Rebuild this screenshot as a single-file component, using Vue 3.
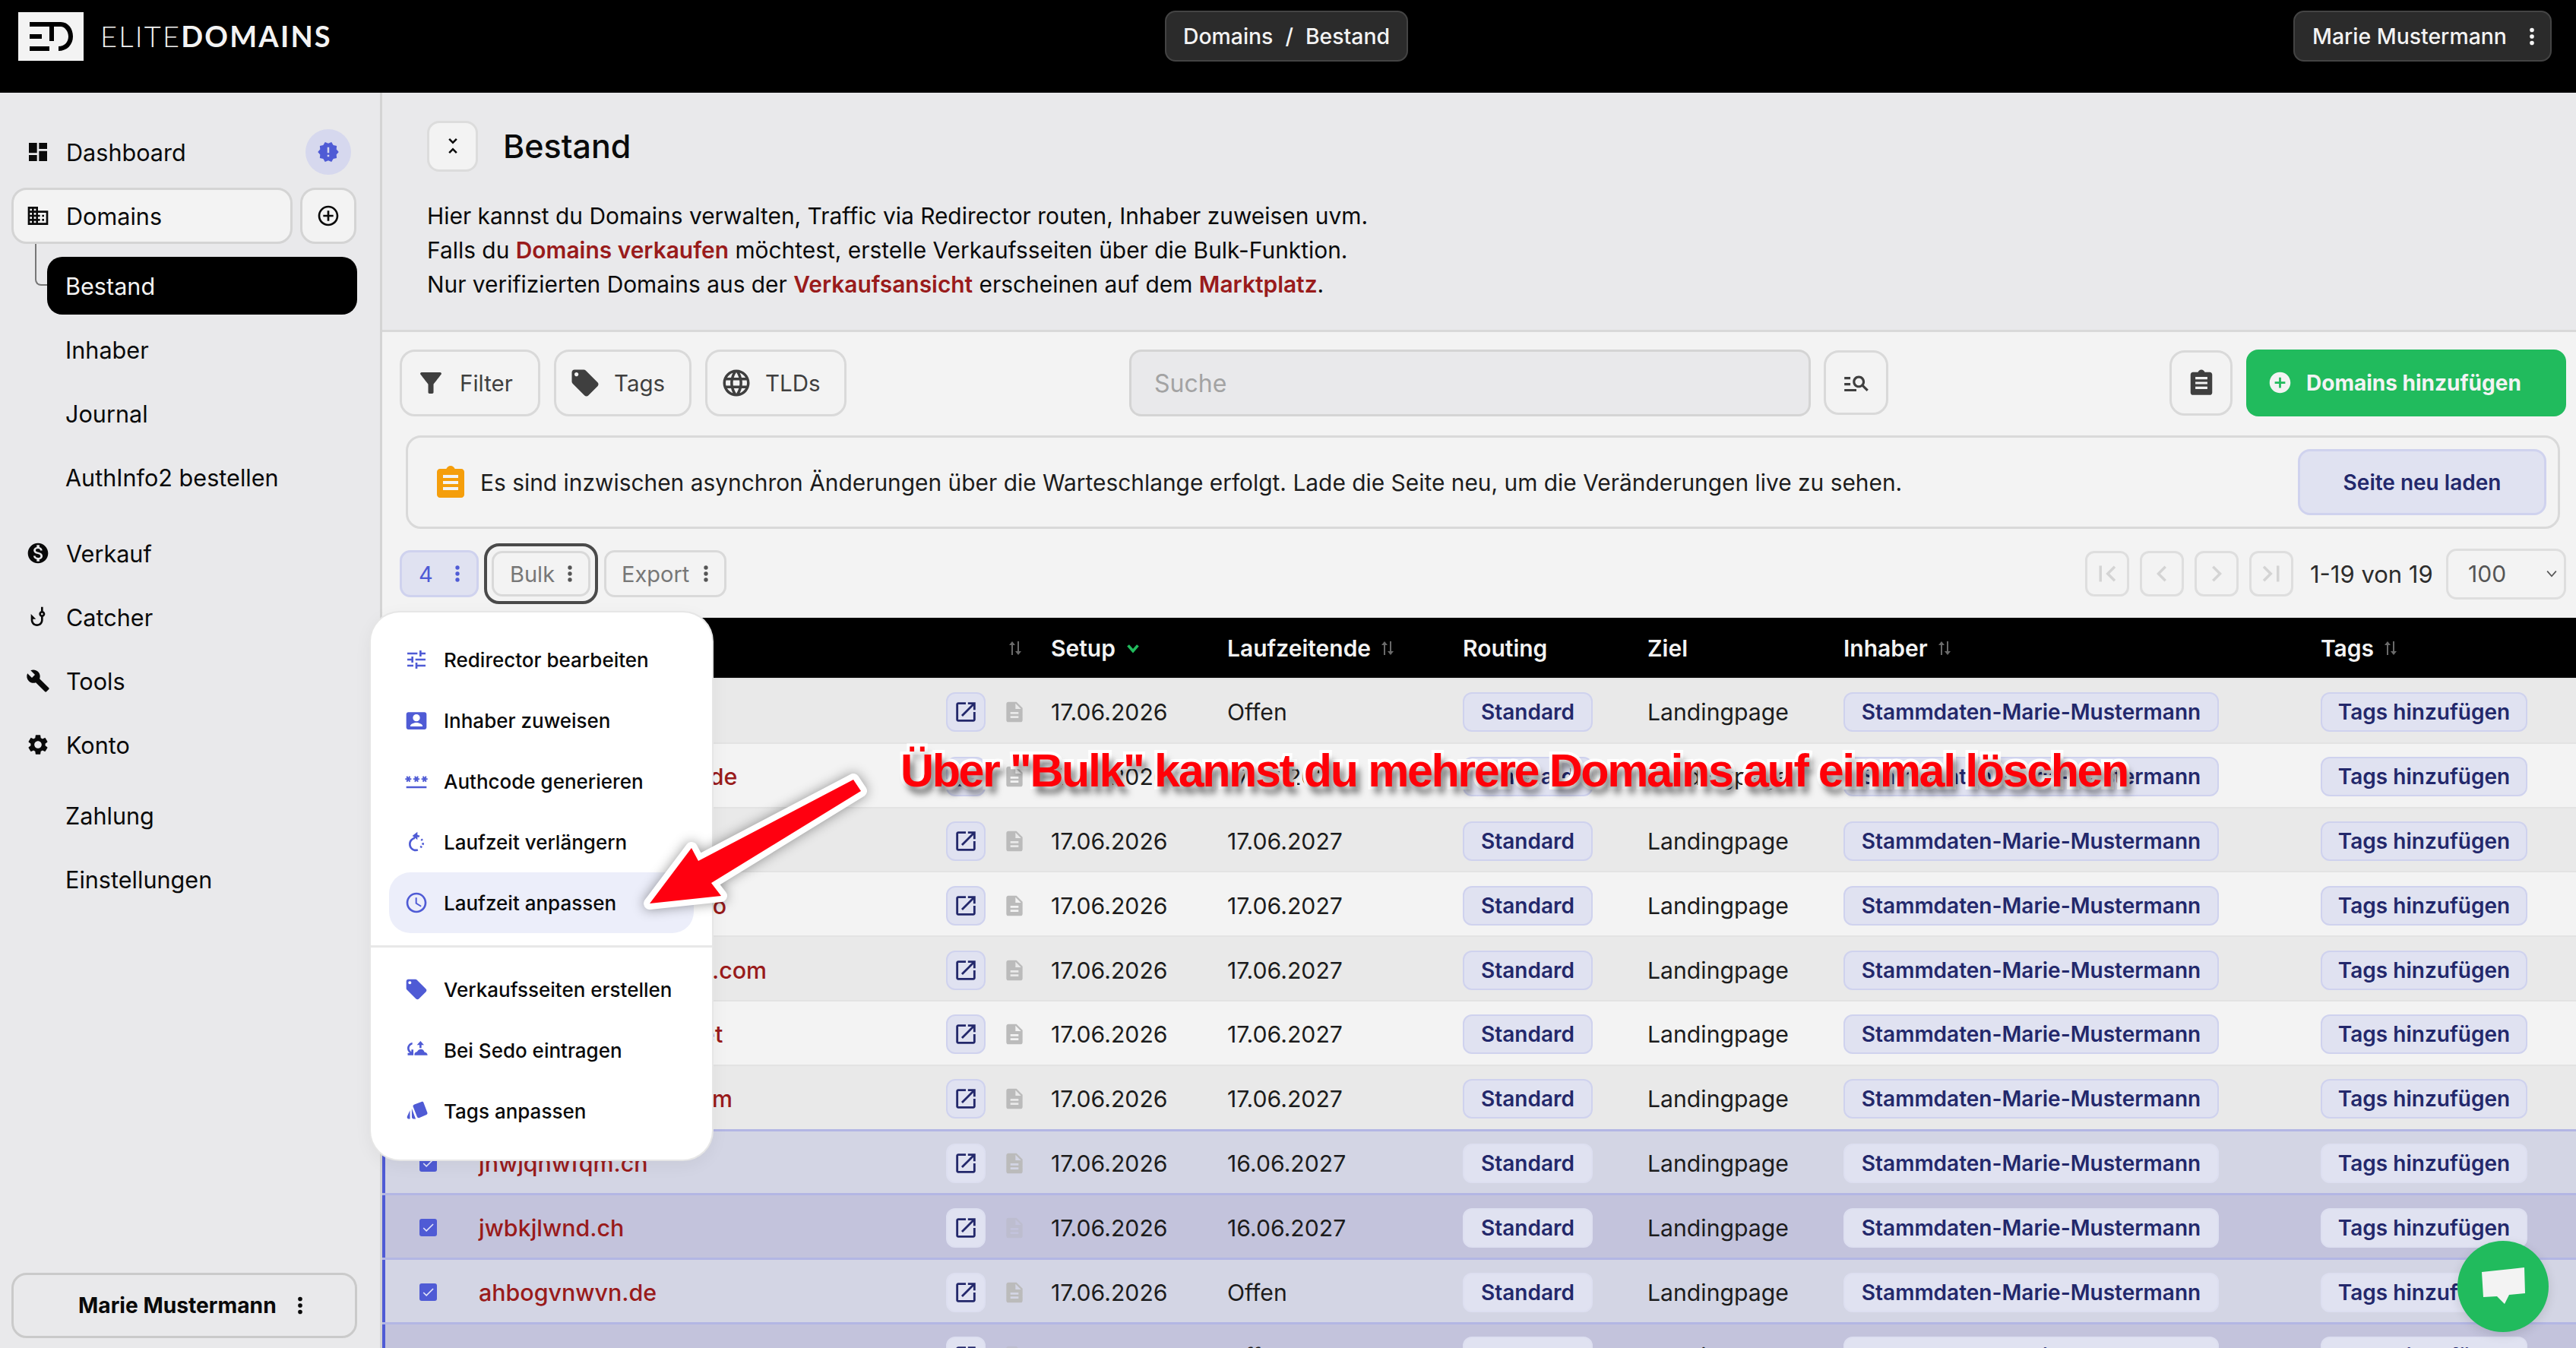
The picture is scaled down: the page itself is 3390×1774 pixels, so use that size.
<script setup>
const icons = {
  dashboard: 'M3 13h8V3H3v10zm0 8h8v-6H3v6zm10 0h8V11h-8v10zm0-18v6h8V3h-8z',
  domain: 'M12 7V3H2v18h20V7H12zM6 19H4v-2h2v2zm0-4H4v-2h2v2zm0-4H4V9h2v2zm0-4H4V5h2v2zm4 12H8v-2h2v2zm0-4H8v-2h2v2zm0-4H8V9h2v2zm0-4H8V5h2v2zm10 12h-8v-2h2v-2h-2v-2h2v-2h-2V9h8v10zm-2-8h-2v2h2v-2zm0 4h-2v2h2v-2z',
  addCircle: 'M13 7h-2v4H7v2h4v4h2v-4h4v-2h-4V7zm-1-5C6.48 2 2 6.48 2 12s4.48 10 10 10 10-4.48 10-10S17.52 2 12 2zm0 18c-4.41 0-8-3.59-8-8s3.59-8 8-8 8 3.59 8 8-3.59 8-8 8z',
  addFill: 'M12 2C6.48 2 2 6.48 2 12s4.48 10 10 10 10-4.48 10-10S17.52 2 12 2zm5 11h-4v4h-2v-4H7v-2h4V7h2v4h4v2z',
  release: 'M23 12l-2.44-2.78.34-3.68-3.61-.82-1.89-3.18L12 3 8.6 1.54 6.71 4.72l-3.61.81.34 3.68L1 12l2.44 2.78-.34 3.69 3.61.82 1.89 3.18L12 21l3.4 1.46 1.89-3.18 3.61-.82-.34-3.68L23 12zm-10 5h-2v-2h2v2zm0-4h-2V7h2v6z',
  unfold: 'M7.41 18.59L8.83 20 12 16.83 15.17 20l1.41-1.41L12 14l-4.59 4.59zm9.18-13.18L15.17 4 12 7.17 8.83 4 7.41 5.41 12 10l4.59-4.59z',
  filter: 'M4.25 5.61C6.27 8.2 10 13 10 13v6c0 .55.45 1 1 1h2c.55 0 1-.45 1-1v-6s3.72-4.8 5.74-7.39A.998.998 0 0 0 18.95 4H5.04a1 1 0 0 0-.79 1.61z',
  tag: 'M21.41 11.58l-9-9C12.05 2.22 11.55 2 11 2H4c-1.1 0-2 .9-2 2v7c0 .55.22 1.05.59 1.42l9 9c.36.36.86.58 1.41.58.55 0 1.05-.22 1.41-.59l7-7c.37-.36.59-.86.59-1.41 0-.55-.23-1.06-.59-1.42zM5.5 7C4.67 7 4 6.33 4 5.5S4.67 4 5.5 4 7 4.67 7 5.5 6.33 7 5.5 7z',
  globe: 'M11.99 2C6.47 2 2 6.48 2 12s4.47 10 9.99 10C17.52 22 22 17.52 22 12S17.52 2 11.99 2zm6.93 6h-2.95c-.32-1.25-.78-2.45-1.38-3.56 1.84.63 3.37 1.91 4.33 3.56zM12 4.04c.83 1.2 1.48 2.53 1.91 3.96h-3.82c.43-1.43 1.08-2.76 1.91-3.96zM4.26 14C4.1 13.36 4 12.69 4 12s.1-1.36.26-2h3.38c-.08.66-.14 1.32-.14 2 0 .68.06 1.34.14 2H4.26zm.82 2h2.95c.32 1.25.78 2.45 1.38 3.56-1.84-.63-3.37-1.9-4.33-3.56zm2.95-8H5.08c.96-1.66 2.49-2.93 4.33-3.56C8.81 5.55 8.35 6.75 8.03 8zM12 19.96c-.83-1.2-1.48-2.53-1.91-3.96h3.82c-.43 1.43-1.08 2.76-1.91 3.96zM14.34 14H9.66c-.09-.66-.16-1.32-.16-2 0-.68.07-1.35.16-2h4.68c.09.65.16 1.32.16 2 0 .68-.07 1.34-.16 2zm.25 5.56c.6-1.11 1.06-2.31 1.38-3.56h2.95c-.96 1.65-2.49 2.93-4.33 3.56zM16.36 14c.08-.66.14-1.32.14-2 0-.68-.06-1.34-.14-2h3.38c.16.64.26 1.31.26 2s-.1 1.36-.26 2h-3.38z',
  clip: 'M19 3h-4.18C14.4 1.84 13.3 1 12 1c-1.3 0-2.4.84-2.82 2H5c-1.1 0-2 .9-2 2v15c0 1.1.9 2 2 2h14c1.1 0 2-.9 2-2V5c0-1.1-.9-2-2-2zM7 7h10v2H7V7zm0 4h10v2H7v-2zm0 4h10v2H7v-2z',
  search: 'M7 9H2V7h5v2zm0 3H2v2h5v-2zm13.59 7l-3.83-3.83c-.8.52-1.74.83-2.76.83-2.76 0-5-2.24-5-5s2.24-5 5-5 5 2.24 5 5c0 1.02-.31 1.96-.83 2.75L22 17.59 20.59 19zM17 11c0-1.65-1.35-3-3-3s-3 1.35-3 3 1.35 3 3 3 3-1.35 3-3zM2 19h10v-2H2v2z',
  money: 'M12 2C6.48 2 2 6.48 2 12s4.48 10 10 10 10-4.48 10-10S17.52 2 12 2zm1.41 16.09V20h-2.67v-1.93c-1.71-.36-3.16-1.46-3.27-3.4h1.96c.1 1.05.82 1.87 2.65 1.87 1.96 0 2.4-.98 2.4-1.59 0-.83-.44-1.61-2.67-2.14-2.48-.6-4.18-1.62-4.18-3.67 0-1.72 1.39-2.84 3.11-3.21V4h2.67v1.95c1.86.45 2.79 1.86 2.87 3.39H14.3c-.05-1.11-.64-1.87-2.22-1.87-1.5 0-2.4.68-2.4 1.64 0 .84.65 1.39 2.67 1.91s4.18 1.39 4.18 3.91c-.01 1.83-1.38 2.83-3.12 3.16z',
  hook: 'M19 9c0-1.3-.84-2.4-2-2.82V2h-2v4.18C13.84 6.6 13 7.7 13 9s.84 2.4 2 2.82V15c0 2.21-1.79 4-4 4s-4-1.79-4-4v-1h3L5 9v6c0 3.31 2.69 6 6 6s6-2.69 6-6v-3.18c1.16-.42 2-1.52 2-2.82zm-3 1c-.55 0-1-.45-1-1s.45-1 1-1 1 .45 1 1-.45 1-1 1z',
  wrench: 'M22.7 19l-9.1-9.1c.9-2.3.4-5-1.5-6.9-2-2-5-2.4-7.4-1.3L9 6 6 9 1.6 4.7C.4 7.1.9 10.1 2.9 12.1c1.9 1.9 4.6 2.4 6.9 1.5l9.1 9.1c.4.4 1 .4 1.4 0l2.3-2.3c.5-.4.5-1.1.1-1.4z',
  gear: 'M19.14 12.94c.04-.3.06-.61.06-.94 0-.32-.02-.64-.07-.94l2.03-1.58c.18-.14.23-.41.12-.61l-1.92-3.32c-.12-.22-.37-.29-.59-.22l-2.39.96c-.5-.38-1.03-.7-1.62-.94l-.36-2.54c-.04-.24-.24-.41-.48-.41h-3.84c-.24 0-.43.17-.47.41l-.36 2.54c-.59.24-1.13.57-1.62.94l-2.39-.96c-.22-.08-.47 0-.59.22L2.74 8.87c-.12.21-.08.47.12.61l2.03 1.58c-.05.3-.09.63-.09.94s.02.64.07.94l-2.03 1.58c-.18.14-.23.41-.12.61l1.92 3.32c.12.22.37.29.59.22l2.39-.96c.5.38 1.03.7 1.62.94l.36 2.54c.05.24.24.41.48.41h3.84c.24 0 .44-.17.47-.41l.36-2.54c.59-.24 1.13-.56 1.62-.94l2.39.96c.22.08.47 0 .59-.22l1.92-3.32c.12-.22.07-.47-.12-.61l-2.01-1.58zM12 15.6c-1.98 0-3.6-1.62-3.6-3.6s1.62-3.6 3.6-3.6 3.6 1.62 3.6 3.6-1.62 3.6-3.6 3.6z',
  tune: 'M3 17v2h6v-2H3zM3 5v2h10V5H3zm10 16v-2h8v-2h-8v-2h-2v6h2zM7 9v2H3v2h4v2h2V9H7zm14 4v-2H11v2h10zm-6-4h2V7h4V5h-4V3h-2v6z',
  person: 'M2 6c0-1.1.9-2 2-2h16c1.1 0 2 .9 2 2v13c0 1.1-.9 2-2 2H4c-1.1 0-2-.9-2-2V6zm13.500 3.500a3.500 3.500 0 1 0-7 0 3.500 3.500 0 0 0 7 0zM6 17.500V18h12v-.5c0-2-4-3.200-6-3.200s-6 1.200-6 3.200z',
  password: 'M2 17h20v2H2v-2zm1.15-4.05L4 11.47l.85 1.48 1.3-.75-.85-1.48H7v-1.5H5.3l.85-1.47L4.85 7 4 8.47 3.15 7l-1.3.75.85 1.47H1v1.5h1.7l-.85 1.48 1.3.75zm6.7-.75l1.3.75.85-1.48.85 1.48 1.3-.75-.85-1.48H15v-1.5h-1.7l.85-1.47-1.3-.75L12 8.47 11.15 7l-1.3.75.85 1.47H9v1.5h1.7l-.85 1.48zM23 9.22h-1.7l.85-1.47-1.3-.75L20 8.47 19.15 7l-1.3.75.85 1.47H17v1.5h1.7l-.85 1.48 1.3.75.85-1.48.85 1.48 1.3-.75-.85-1.48H23v-1.5z',
  renew: 'M13 2l-5 4 5 4V7.100c.5.1 1 .2 1.400.4l1-1.700c-.8-.4-1.600-.7-2.400-.8V2zM10.500 7.200C7.100 7.900 4.500 10.700 4.500 14.200c0 3.900 3.100 7 7 7 .8 0 1.500-.1 2.200-.3l-.6-1.900c-.5.1-1 .2-1.600.2-2.800 0-5-2.200-5-5 0-2.500 1.800-4.600 4-5V7.200zM17.500 8.600l-1.400 1.400c.3.300.6.700.8 1.100l1.800-.9c-.3-.6-.7-1.100-1.200-1.600zM19.500 13h-2c0 .5-.1 1-.2 1.500l1.900.6c.2-.7.3-1.400.3-2.100zM18 16.800l-1.600-1.200c-.3.400-.6.700-1 1l1.100 1.600c.6-.4 1.100-.9 1.500-1.400z',
  clock: 'M11.99 2C6.47 2 2 6.48 2 12s4.47 10 9.99 10C17.52 22 22 17.52 22 12S17.52 2 11.99 2zM12 20c-4.42 0-8-3.58-8-8s3.58-8 8-8 8 3.58 8 8-3.58 8-8 8zm.5-13H11v6l5.25 3.15.75-1.23-4.5-2.67z',
  sedo: 'M16 3l-3.500 4H15v3h2V7h2.500L16 3zM8 4.500C5.200 4.900 3 7.300 3 10.200c0 2 1 3.700 2.500 4.700H3.400V17H9v-5.600H7v2.200c-1.200-.7-2-2-2-3.400 0-1.800 1.300-3.400 3-3.800V4.500zM16.500 11c-1.800 0-3.300 1.100-3.900 2.700-1.600.1-2.600 1.300-2.600 2.800 0 .2 0 .3.1.5H23c-.1-1.700-1.500-3-3.100-3.100-.5-1.700-1.700-2.900-3.400-2.900z',
  tagsFan: 'M10.500 5.500L17 3c.9-.3 1.800.1 2.100.9l3.700 9.800c.3.8-.1 1.700-.9 2L15 18.700c-1 .4-2 0-2.400-1L8.700 7.700c-.4-.9.6-1.800 1.800-2.200zM7.400 9.500l3.600 9.600c.1.300.3.6.5.8H9.200c-1 0-1.700-.8-1.700-1.700L7.400 9.500zM5.600 11.500l.1 8.400H4.300c-1.200-.2-1.900-1.400-1.400-2.500l2.700-5.900z',
  openNew: 'M19 19H5V5h7V3H5c-1.11 0-2 .9-2 2v14c0 1.1.89 2 2 2h14c1.1 0 2-.9 2-2v-7h-2v7zM14 3v2h3.59l-9.83 9.83 1.41 1.41L19 6.41V10h2V3h-7z',
  doc: 'M14 2H6c-1.1 0-1.99.9-1.99 2L4 20c0 1.1.89 2 1.99 2H18c1.1 0 2-.9 2-2V8l-6-6zm2 16H8v-2h8v2zm0-4H8v-2h8v2zm-3-5V3.5L18.5 9H13z',
  first: 'M18.41 16.59L13.82 12l4.59-4.59L17 6l-6 6 6 6zM6 6h2v12H6z',
  prev: 'M15.41 7.41L14 6l-6 6 6 6 1.41-1.41L10.83 12z',
  next: 'M10 6L8.59 7.41 13.17 12l-4.58 4.59L10 18l6-6z',
  last: 'M5.59 7.41L10.18 12l-4.59 4.59L7 18l6-6-6-6zM16 6h2v12h-2z',
  more: 'M12 8a2 2 0 1 0 0-4 2 2 0 0 0 0 4zm0 2a2 2 0 1 0 0 4 2 2 0 0 0 0-4zm0 6a2 2 0 1 0 0 4 2 2 0 0 0 0-4z',
  check: 'M9 16.2L4.8 12l-1.4 1.4L9 19 21 7l-1.4-1.4z',
  sort: 'M8 3L4 8h3v13h2V8h3L8 3zM16 21l4-5h-3V3h-2v13h-3l4 5z'
}

const navTop = [
  { label: 'Dashboard', icon: 'dashboard' }
]
const subNav = ['Inhaber', 'Journal', 'AuthInfo2 bestellen']
const navMain = [
  { label: 'Verkauf', icon: 'money' },
  { label: 'Catcher', icon: 'hook' },
  { label: 'Tools', icon: 'wrench' },
  { label: 'Konto', icon: 'gear' }
]
const navSub2 = ['Zahlung', 'Einstellungen']

const toolbar = [
  { label: 'Filter', icon: 'filter', cls: 'w-filter' },
  { label: 'Tags', icon: 'tag', cls: 'w-tags' },
  { label: 'TLDs', icon: 'globe', cls: 'w-tlds' }
]

const pages = ['first', 'prev', 'next', 'last']

const menuA = [
  { label: 'Redirector bearbeiten', icon: 'tune' },
  { label: 'Inhaber zuweisen', icon: 'person' },
  { label: 'Authcode generieren', icon: 'password' },
  { label: 'Laufzeit verlängern', icon: 'renew' },
  { label: 'Laufzeit anpassen', icon: 'clock', active: true }
]
const menuB = [
  { label: 'Verkaufsseiten erstellen', icon: 'tag' },
  { label: 'Bei Sedo eintragen', icon: 'sedo' },
  { label: 'Tags anpassen', icon: 'tagsFan' }
]

const rows = [
  { domain: 'qtzmkhrlwpv.ch', end: 'Offen', sel: 0 },
  { domain: 'vkhtrzpqmlwgbnxss.de', end: '17.06.2027', sel: 0 },
  { domain: 'pwnqzrtkvhl.ch', end: '17.06.2027', sel: 0 },
  { domain: 'hrvkzmtqlwpbnzg.info', end: '17.06.2027', sel: 0 },
  { domain: 'zbtwkqrhmnpvgxlkrz.com', end: '17.06.2027', sel: 0 },
  { domain: 'lgkvnqwrtzhmpqrj.net', end: '17.06.2027', sel: 0 },
  { domain: 'wmqkrvtzphlnkvb.com', end: '17.06.2027', sel: 0 },
  { domain: 'jnwjqnwfqm.ch', end: '16.06.2027', sel: 1 },
  { domain: 'jwbkjlwnd.ch', end: '16.06.2027', sel: 2 },
  { domain: 'ahbogvnwvn.de', end: 'Offen', sel: 1 },
  { domain: 'mnvbqkdwlz.de', end: 'Offen', sel: 2 }
]
</script>

<template>
  <div class="page">
    <header class="topbar">
      <div class="brand">
        <svg class="logo" viewBox="0 0 86 64">
          <rect width="86" height="64" fill="#f3f3f3" />
          <path d="M15 13H56C66 13 72 22 72 32C72 43 64 51 53 51V45C61 45 66 39 66 32C66 25 61 19 56 19H47V38H41V19H15ZM15 29H31V35H15ZM15 45H41V51H15Z" fill="#000" />
        </svg>
        <span class="wordmark"><span class="thin">ELITE</span><span class="strong">DOMAINS</span></span>
      </div>
      <div class="crumb"><span>Domains</span><span class="slash">/</span><span>Bestand</span></div>
      <div class="user-pill">
        <span>Marie Mustermann</span>
        <svg class="more-ico" viewBox="0 0 24 24"><path :d="icons.more" /></svg>
      </div>
    </header>

    <div class="body">
      <aside class="sidebar">
        <div v-for="n in navTop" :key="n.label" class="nav-row first">
          <svg class="nav-ico" viewBox="0 0 24 24"><path :d="icons[n.icon]" /></svg>
          <span>{{ n.label }}</span>
          <span class="badge"><svg viewBox="0 0 24 24"><path :d="icons.release" /></svg></span>
        </div>
        <div class="domains-row">
          <div class="domains-box">
            <svg class="nav-ico" viewBox="0 0 24 24"><path :d="icons.domain" /></svg>
            <span>Domains</span>
          </div>
          <div class="plus-box"><svg viewBox="0 0 24 24"><path :d="icons.addCircle" /></svg></div>
        </div>
        <div class="tree">
          <span class="tree-line"></span>
          <div class="active-item">Bestand</div>
          <div v-for="s in subNav" :key="s" class="sub-item">{{ s }}</div>
        </div>
        <div class="main-nav">
          <div v-for="n in navMain" :key="n.label" class="nav-row">
            <svg class="nav-ico" viewBox="0 0 24 24"><path :d="icons[n.icon]" /></svg>
            <span>{{ n.label }}</span>
          </div>
        </div>
        <div class="konto-sub">
          <div v-for="s in navSub2" :key="s" class="sub-item">{{ s }}</div>
        </div>
        <div class="user-box">
          <span>Marie Mustermann</span>
          <svg class="more-ico" viewBox="0 0 24 24"><path :d="icons.more" /></svg>
        </div>
      </aside>

      <main class="main">
        <section class="intro">
          <div class="title-row">
            <div class="collapse"><svg viewBox="0 0 24 24"><path :d="icons.unfold" /></svg></div>
            <h1>Bestand</h1>
          </div>
          <p>Hier kannst du Domains verwalten, Traffic via Redirector routen, Inhaber zuweisen uvm.</p>
          <p>Falls du <b>Domains verkaufen</b> möchtest, erstelle Verkaufsseiten über die Bulk-Funktion.</p>
          <p>Nur verifizierten Domains aus der <b>Verkaufsansicht</b> erscheinen auf dem <b>Marktplatz</b>.</p>
        </section>

        <section class="toolbar">
          <div v-for="b in toolbar" :key="b.label" class="tool-btn" :class="b.cls">
            <svg viewBox="0 0 24 24"><path :d="icons[b.icon]" /></svg>
            <span>{{ b.label }}</span>
          </div>
          <div class="search">Suche</div>
          <div class="icon-btn search-btn"><svg viewBox="0 0 24 24"><path :d="icons.search" /></svg></div>
          <div class="icon-btn clip-btn"><svg viewBox="0 0 24 24"><path :d="icons.clip" fill-rule="evenodd" /></svg></div>
          <div class="add-btn">
            <svg viewBox="0 0 24 24"><path :d="icons.addFill" /></svg>
            <span>Domains hinzufügen</span>
          </div>
        </section>

        <section class="notice">
          <svg class="notice-ico" viewBox="0 0 24 24"><path :d="icons.clip" fill-rule="evenodd" /></svg>
          <span class="notice-text">Es sind inzwischen asynchron Änderungen über die Warteschlange erfolgt. Lade die Seite neu, um die Veränderungen live zu sehen.</span>
          <div class="reload">Seite neu laden</div>
        </section>

        <section class="actions">
          <div class="act count"><span>4</span><svg viewBox="0 0 24 24"><path :d="icons.more" /></svg></div>
          <div class="focus-ring"><div class="act bulk"><span>Bulk</span><svg viewBox="0 0 24 24"><path :d="icons.more" /></svg></div></div>
          <div class="act export"><span>Export</span><svg viewBox="0 0 24 24"><path :d="icons.more" /></svg></div>
          <div class="pager">
            <div v-for="p in pages" :key="p" class="page-btn"><svg viewBox="0 0 24 24"><path :d="icons[p]" /></svg></div>
            <span class="page-text">1-19 von 19</span>
            <div class="per-page">
              <span>100</span>
              <svg viewBox="0 0 24 24"><path d="M5 8l7 8 7-8" fill="none" stroke="#555" stroke-width="2" /></svg>
            </div>
          </div>
        </section>

        <section class="table">
          <div class="thead grid">
            <span></span>
            <span>Domain</span>
            <span></span>
            <span class="sort-only"><svg class="sort" viewBox="0 0 24 24"><path :d="icons.sort" /></svg></span>
            <span class="th">Setup <svg class="chev" viewBox="0 0 24 24"><path d="M5 8l7 8 7-8" fill="none" stroke="#21bb5d" stroke-width="4" /></svg></span>
            <span class="th">Laufzeitende <svg class="sort" viewBox="0 0 24 24"><path :d="icons.sort" /></svg></span>
            <span class="th">Routing</span>
            <span class="th">Ziel</span>
            <span class="th">Inhaber <svg class="sort" viewBox="0 0 24 24"><path :d="icons.sort" /></svg></span>
            <span class="th">Tags <svg class="sort" viewBox="0 0 24 24"><path :d="icons.sort" /></svg></span>
          </div>
          <div
            v-for="(r, i) in rows"
            :key="r.domain"
            class="row grid"
            :class="[i % 2 ? 'even' : 'odd', r.sel ? 'sel sel-' + r.sel : '']"
          >
            <span class="cb-cell">
              <span class="cb" :class="{ on: r.sel }">
                <svg v-if="r.sel" viewBox="0 0 24 24"><path :d="icons.check" /></svg>
              </span>
            </span>
            <span class="dom">{{ r.domain }}</span>
            <span class="open"><svg viewBox="0 0 24 24"><path :d="icons.openNew" /></svg></span>
            <span class="docu"><svg viewBox="0 0 24 24"><path :d="icons.doc" /></svg></span>
            <span>17.06.2026</span>
            <span>{{ r.end }}</span>
            <span class="pill p-std">Standard</span>
            <span>Landingpage</span>
            <span class="pill p-own">Stammdaten-Marie-Mustermann</span>
            <span class="pill p-tag">Tags hinzufügen</span>
          </div>
        </section>
      </main>
    </div>

    <div class="menu">
      <div class="menu-group">
        <div v-for="m in menuA" :key="m.label" class="menu-item" :class="{ active: m.active }">
          <svg viewBox="0 0 24 24"><path :d="icons[m.icon]" /></svg>
          <span>{{ m.label }}</span>
        </div>
      </div>
      <div class="menu-sep"></div>
      <div class="menu-group b">
        <div v-for="m in menuB" :key="m.label" class="menu-item">
          <svg viewBox="0 0 24 24"><path :d="icons[m.icon]" /></svg>
          <span>{{ m.label }}</span>
        </div>
      </div>
    </div>

    <div class="chat">
      <svg viewBox="0 0 120 120"><path d="M32 41L88 35 89 69 68 71 62 83 52 73 34 74z" fill="#f3f3f3" /></svg>
    </div>

    <svg class="arrow" viewBox="0 0 3390 1774">
      <polygon points="855,1189 910,1116 919,1133 1123,1026 1133,1041 936,1162 949,1179" fill="#ff0010" stroke="#fff" stroke-width="16" stroke-linejoin="round" paint-order="stroke" />
    </svg>
    <div class="callout">Über "Bulk" kannst du mehrere Domains auf einmal löschen</div>
  </div>
</template>

<style scoped>
.page {
  position: relative;
  width: 3390px;
  height: 1774px;
  overflow: hidden;
  background: #f3f3f3;
  font-family: Inter, "Noto Sans", sans-serif;
  font-size: 30px;
  color: #0a0a0a;
}
svg { display: block; flex: none; fill: currentColor; }

.topbar {
  position: relative;
  height: 122px;
  background: #000;
  display: flex;
  align-items: flex-start;
  justify-content: center;
}
.brand {
  position: absolute;
  left: 24px;
  top: 16px;
  display: flex;
  align-items: center;
  gap: 22px;
}
.logo { width: 86px; height: 64px; }
.wordmark {
  font-family: Lato, Inter, sans-serif;
  font-size: 38px;
  color: #f3f3f3;
  letter-spacing: 2.2px;
  line-height: 1;
  margin-top: -3px;
}
.wordmark .thin { font-weight: 300; }
.wordmark .strong { font-weight: 700; }
.crumb, .user-pill {
  height: 67px;
  margin-top: 14px;
  background: #2b2b2b;
  border: 2px solid #444;
  border-radius: 14px;
  box-sizing: border-box;
  display: flex;
  align-items: center;
  color: #f3f3f3;
  font-size: 28.4px;
  font-weight: 500;
}
.crumb { width: 320px; margin-right: 4px; justify-content: center; gap: 16px; }
.user-pill {
  position: absolute;
  left: 3018px;
  top: 0;
  width: 340px;
  padding-left: 23px;
  gap: 16px;
}
.more-ico { width: 34px; height: 34px; }

.body { display: flex; height: 1652px; }

.sidebar {
  width: 503px;
  flex: none;
  box-sizing: border-box;
  background: #e9e9eb;
  border-right: 3px solid #d4d4d4;
  padding: 41px 0 13px;
  display: flex;
  flex-direction: column;
  font-size: 30.6px;
}
.nav-row {
  height: 76px;
  display: flex;
  align-items: center;
  padding-left: 34px;
  gap: 21px;
  margin-bottom: 8px;
}
.nav-row.first { height: 74px; margin-bottom: 10px; position: relative; }
.nav-ico { width: 32px; height: 32px; }
.badge {
  position: absolute;
  left: 402px;
  top: 7px;
  width: 60px;
  height: 60px;
  border-radius: 50%;
  background: #d6d8ee;
  color: #4f5bd5;
  display: flex;
  align-items: center;
  justify-content: center;
}
.badge svg { width: 30px; height: 30px; }
.domains-row { display: flex; gap: 10px; padding-left: 15px; }
.domains-box, .plus-box {
  height: 74px;
  box-sizing: border-box;
  background: #f3f3f3;
  border: 3px solid #d4d4d4;
  border-radius: 20px;
  display: flex;
  align-items: center;
}
.domains-box { width: 370px; padding-left: 16px; gap: 21px; }
.plus-box { width: 74px; justify-content: center; }
.plus-box svg { width: 32px; height: 32px; }
.tree { position: relative; padding-top: 17px; margin-bottom: 16px; }
.tree-line {
  position: absolute;
  left: 46px;
  top: 0;
  width: 16px;
  height: 55px;
  border-left: 2px solid #777;
  border-bottom: 2px solid #777;
  border-bottom-left-radius: 8px;
  box-sizing: border-box;
}
.active-item {
  margin-left: 62px;
  width: 408px;
  height: 76px;
  box-sizing: border-box;
  padding-left: 24px;
  border-radius: 20px;
  background: #000;
  color: #f3f3f3;
  display: flex;
  align-items: center;
  margin-bottom: 8px;
}
.sub-item {
  height: 76px;
  padding-left: 86px;
  display: flex;
  align-items: center;
  margin-bottom: 8px;
}
.konto-sub { margin-top: 9px; }
.user-box {
  margin: auto 30px 0 15px;
  height: 86px;
  box-sizing: border-box;
  border: 3px solid #cacaca;
  border-radius: 20px;
  display: flex;
  align-items: center;
  padding-left: 85px;
  gap: 14px;
  font-size: 28.2px;
  font-weight: 700;
}

.main { flex: 1; min-width: 0; background: #f3f3f3; }
.intro {
  height: 315px;
  box-sizing: border-box;
  background: #e9e9eb;
  border-bottom: 3px solid #d9d9d9;
  padding: 36px 0 0 59px;
}
.title-row { display: flex; align-items: center; gap: 33px; margin-bottom: 36px; }
.collapse {
  width: 67px;
  height: 67px;
  box-sizing: border-box;
  background: #f3f3f3;
  border: 3px solid #dcdcdc;
  border-radius: 16px;
  display: flex;
  align-items: center;
  justify-content: center;
}
.collapse svg { width: 30px; height: 30px; }
h1 { margin: 1px 0 0; font-size: 43px; font-weight: 500; line-height: 67px; }
.intro p { margin: 0; height: 45px; line-height: 45px; font-size: 29.9px; }
.intro b { color: #991b1b; font-weight: 600; }

.toolbar {
  display: flex;
  align-items: center;
  padding: 23px 13px 0 23px;
  height: 87px;
  color: #3f3f3f;
  font-size: 29.5px;
}
.tool-btn, .icon-btn {
  height: 88px;
  box-sizing: border-box;
  background: #f3f3f3;
  border: 3px solid #d9d9d9;
  border-radius: 20px;
  display: flex;
  align-items: center;
}
.tool-btn { margin-right: 18px; padding-left: 17px; gap: 17px; }
.tool-btn svg { width: 42px; height: 42px; }
.w-filter { width: 185px; }
.w-tags { width: 181px; }
.w-tlds { width: 186px; }
.search {
  margin-left: 354px;
  width: 897px;
  height: 88px;
  box-sizing: border-box;
  background: #e9e9eb;
  border: 3px solid #d4d4d4;
  border-radius: 16px;
  color: #a3a3a3;
  display: flex;
  align-items: center;
  padding: 2px 0 0 30px;
  font-size: 32px;
}
.icon-btn { justify-content: center; }
.search-btn { margin-left: 17px; width: 85px; height: 85px; }
.search-btn svg { width: 38px; height: 38px; }
.clip-btn { margin-left: auto; width: 83px; height: 86px; }
.clip-btn svg { width: 38px; height: 38px; }
.add-btn {
  margin-left: 18px;
  width: 421px;
  height: 88px;
  box-sizing: border-box;
  background: #21bb5d;
  border-radius: 16px;
  color: #f3f3f3;
  display: flex;
  align-items: center;
  padding-left: 28px;
  gap: 18px;
  font-size: 28px;
  font-weight: 700;
}
.add-btn svg { width: 33px; height: 33px; }

.notice {
  margin: 26px 21px 0 31px;
  height: 123px;
  box-sizing: border-box;
  border: 3px solid #d9d9d9;
  border-radius: 20px;
  display: flex;
  align-items: center;
  padding: 0 15px 0 32px;
  font-size: 29.9px;
  color: #1c1c1c;
}
.notice-ico { width: 48px; height: 48px; color: #f59e0b; margin-right: 15px; }
.notice-text { flex: 1; }
.reload {
  width: 327px;
  height: 87px;
  box-sizing: border-box;
  background: #e0e2f1;
  border: 3px solid #cfd2ee;
  border-radius: 16px;
  color: #23286b;
  font-size: 28px;
  font-weight: 600;
  display: flex;
  align-items: center;
  justify-content: center;
}

.actions {
  display: flex;
  align-items: center;
  height: 62px;
  margin-top: 28px;
  padding: 0 13px 0 23px;
}
.act {
  height: 62px;
  box-sizing: border-box;
  border: 3px solid #d9d9d9;
  border-radius: 14px;
  display: flex;
  align-items: center;
  color: #777;
  font-size: 29px;
}
.act svg { width: 32px; height: 32px; color: #555; }
.count {
  width: 104px;
  background: #e0e2f1;
  border-color: #cfd2ee;
  color: #4f5bd5;
  padding-left: 22px;
  gap: 16px;
}
.count svg { color: #4f5bd5; }
.focus-ring {
  margin-left: 7px;
  padding: 6px;
  border: 4px solid #4a4a4a;
  border-radius: 20px;
  display: flex;
  height: 80px;
  box-sizing: border-box;
  align-items: center;
}
.bulk { width: 130px; height: 60px; padding-left: 21px; gap: 4px; }
.export { width: 161px; margin-left: 8px; padding-left: 20px; gap: 6px; }
.pager { margin-left: auto; display: flex; align-items: center; }
.page-btn {
  width: 58px;
  height: 60px;
  box-sizing: border-box;
  margin-right: 14px;
  border: 3px solid #dedede;
  border-radius: 12px;
  display: flex;
  align-items: center;
  justify-content: center;
  color: #d4d4d4;
}
.page-btn svg { width: 42px; height: 42px; }
.page-text { margin-left: 8px; width: 179px; color: #2c2c2c; font-size: 31px; white-space: nowrap; }
.per-page {
  width: 158px;
  height: 67px;
  box-sizing: border-box;
  border: 3px solid #dedede;
  border-radius: 14px;
  display: flex;
  align-items: center;
  justify-content: space-between;
  padding: 0 6px 0 26px;
  color: #555;
  font-size: 30px;
}
.per-page svg { width: 20px; height: 20px; }

.table { margin-top: 27px; }
.grid {
  display: grid;
  grid-template-columns: 127px 615px 76px 62px 232px 310px 243px 258px 628px 336px;
  align-items: center;
}
.thead {
  height: 79px;
  background: #000;
  color: #f3f3f3;
  font-size: 30px;
  font-weight: 600;
}
.th { display: flex; align-items: center; gap: 10px; }
.sort-only { display: flex; margin-left: 3px; }
.sort { width: 24px; height: 28px; color: #6a6a6a; }
.chev { width: 22px; height: 22px; margin-left: 2px; }
.row {
  height: 84.8px;
  box-sizing: border-box;
  padding-top: 6px;
  font-size: 30.2px;
  color: #1c1c1c;
  box-shadow: inset 0 2px 0 #e3e3e3;
}
.row.odd { background: #e9e9e9; }
.row.even { background: #f3f3f3; }
.row.sel { box-shadow: inset 0 3px 0 #b3b6e4, inset 4px 0 0 #4f5bd5; }
.row.sel-1 { background: #d3d5e4; }
.row.sel-2 { background: #c3c3dc; }
.cb-cell { display: flex; padding-left: 49px; }
.cb {
  width: 23px;
  height: 23px;
  border-radius: 3px;
  background: #f7f7f7;
  display: flex;
  align-items: center;
  justify-content: center;
}
.cb.on { background: #4f5bd5; color: #e4e6fa; }
.cb svg { width: 19px; height: 19px; }
.dom { color: #991b1b; font-weight: 500; font-size: 30.4px; }
.open {
  width: 52px;
  height: 52px;
  box-sizing: border-box;
  background: #e0e2f1;
  border: 2px solid #cfd2ee;
  border-radius: 12px;
  color: #23286b;
  display: flex;
  align-items: center;
  justify-content: center;
}
.sel .open, .sel .pill { background: #e0e2f1; border-color: #dddff0; }
.open svg { width: 34px; height: 34px; }
.docu { color: #bbb; margin-left: -2px; }
.docu svg { width: 32px; height: 32px; }
.sel-2 .docu { color: #bdbdcf; }
.pill {
  height: 52px;
  box-sizing: border-box;
  background: #e0e2f1;
  border: 2px solid #cfd2ee;
  border-radius: 12px;
  color: #23286b;
  font-size: 28px;
  font-weight: 600;
  display: flex;
  align-items: center;
  justify-content: center;
  white-space: nowrap;
}
.p-std { width: 171px; }
.p-own { width: 494px; }
.p-tag { width: 272px; }

.menu {
  position: absolute;
  left: 488px;
  top: 806px;
  width: 449px;
  height: 720px;
  box-sizing: border-box;
  background: #fff;
  border-radius: 38px;
  box-shadow: 0 0 0 2px #e6e6e6, 0 6px 24px rgba(0, 0, 0, 0.06);
  padding-top: 22px;
  font-size: 26px;
  font-weight: 500;
}
.menu-group { padding: 0 24px; }
.menu-group.b { padding-top: 15px; }
.menu-item {
  height: 80px;
  border-radius: 28px;
  display: flex;
  align-items: center;
  padding-left: 20px;
  gap: 20px;
  color: #0a0a0a;
}
.menu-item svg { width: 32px; height: 32px; color: #4f5bd5; }
.menu-item.active { background: #eceefa; }
.menu-sep { height: 3px; background: #e8e8e8; margin-top: 16px; }

.chat {
  position: absolute;
  left: 3234px;
  top: 1633px;
  width: 120px;
  height: 120px;
  border-radius: 50%;
  background: #21bb5d;
  box-shadow: 0 4px 14px rgba(0, 0, 0, 0.12);
}
.chat svg { width: 120px; height: 120px; }

.arrow {
  position: absolute;
  left: 0;
  top: 0;
  width: 3390px;
  height: 1774px;
  pointer-events: none;
  filter: drop-shadow(0 0 8px rgba(0, 0, 0, 0.4));
}
.callout {
  position: absolute;
  left: 1185px;
  top: 978px;
  font-family: "Liberation Sans", Arial, sans-serif;
  font-weight: 700;
  font-size: 61px;
  letter-spacing: -2.4px;
  line-height: 72px;
  white-space: nowrap;
  color: #ff0008;
  -webkit-text-stroke: 8px #fff;
  paint-order: stroke fill;
  text-shadow: 5px 9px 8px rgba(0, 0, 0, 0.55);
}
</style>

<style>
html, body { margin: 0; padding: 0; background: #f3f3f3; }
</style>
